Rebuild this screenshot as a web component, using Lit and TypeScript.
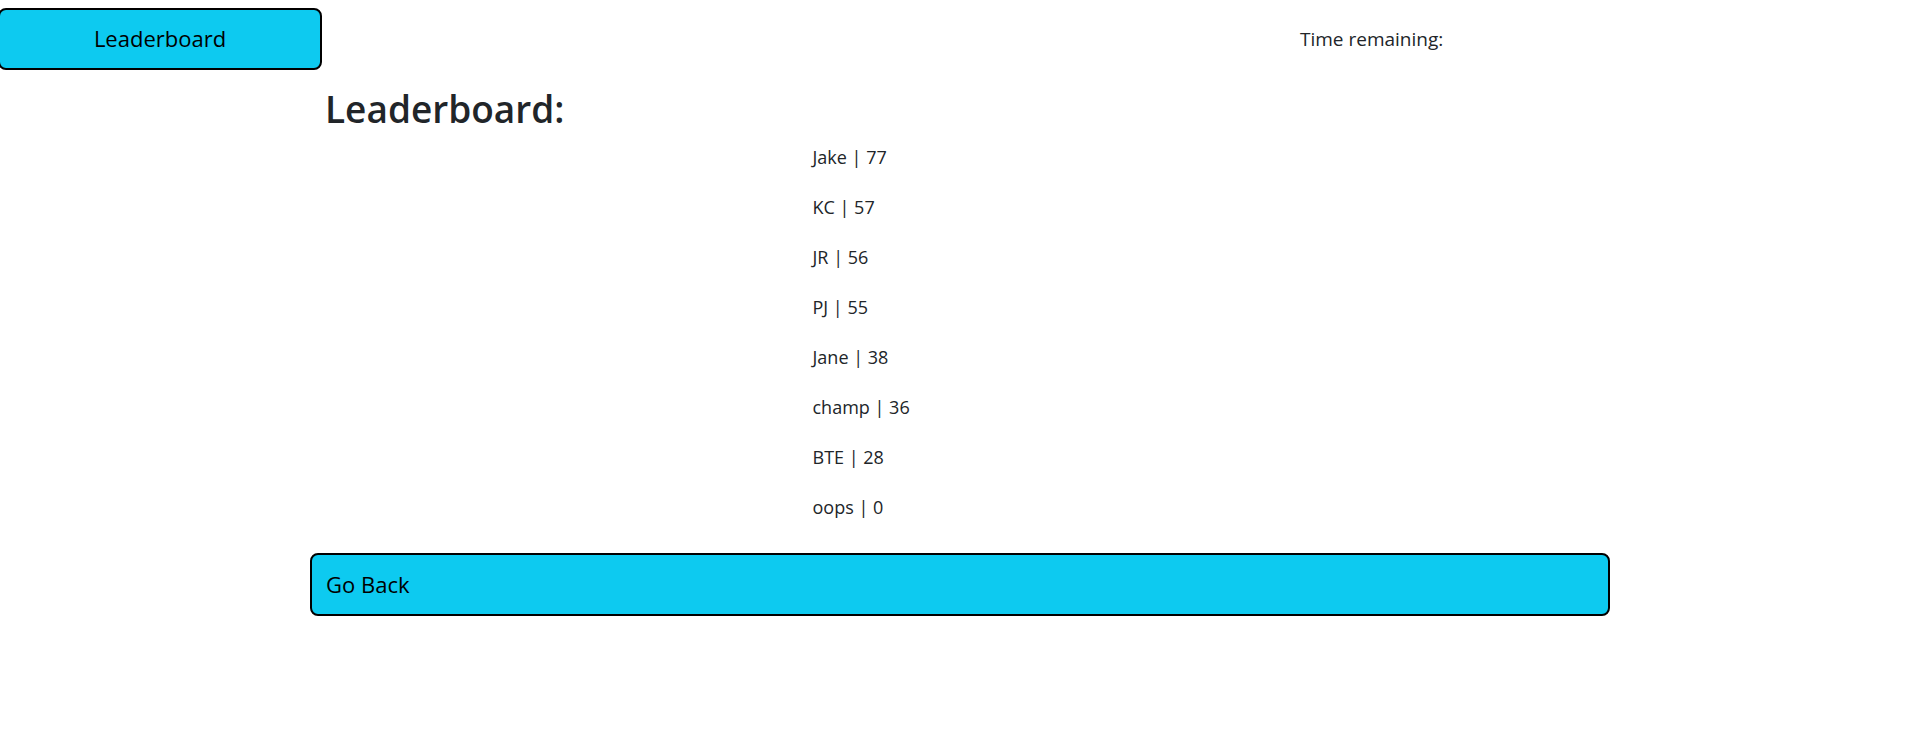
import { LitElement, html, css } from "lit";
import { customElement, state } from "lit/decorators.js";

interface Score {
  name: string;
  points: number;
}

@customElement("app-root")
export class AppRoot extends LitElement {
  static styles = css`
    :host {
      display: block;
      overflow: hidden;
      background: #fff;
      color: #212529;
      font-family: "Segoe UI", "Open Sans", "Noto Sans", sans-serif;
      font-size: 19px;
      line-height: 30px;
    }
    .row {
      display: grid;
      grid-template-columns: repeat(12, minmax(0, 1fr));
      margin: 0 -18px 0 -15px;
    }
    .top {
      padding-top: 8px;
      align-items: center;
    }
    .btn {
      box-sizing: border-box;
      padding: 13px 14px 15px;
      border: 2px solid #000;
      border-radius: 8px;
      background: #0dcaf0;
      color: #000;
      font-family: inherit;
      font-size: 22px;
      font-weight: 400;
      line-height: 30px;
      cursor: pointer;
    }
    .show {
      grid-column: 1 / span 2;
      margin: 0 -12px 0 13px;
    }
    .time {
      grid-column: 9 / span 2;
      padding: 0 15px;
    }
    h1 {
      grid-column: 3 / span 8;
      margin: 15px 0 9px;
      padding: 0 15px;
      font-size: 37px;
      font-weight: 600;
      line-height: 48px;
    }
    .scores {
      grid-column: 6 / span 5;
      margin: 0;
      padding: 0 15px;
      font-size: 18px;
      list-style: none;
    }
    .scores li {
      margin-bottom: 20px;
    }
    .back {
      grid-column: 3 / span 8;
      min-height: 63px;
      margin-top: 11px;
      text-align: left;
    }
  `;

  @state() private scores: Score[] = [
    { name: "Jake", points: 77 },
    { name: "KC", points: 57 },
    { name: "JR", points: 56 },
    { name: "PJ", points: 55 },
    { name: "Jane", points: 38 },
    { name: "champ", points: 36 },
    { name: "BTE", points: 28 },
    { name: "oops", points: 0 },
  ];

  render() {
    return html`
      <header class="row top">
        <button class="btn show" type="button">Leaderboard</button>
        <div class="time">Time remaining:</div>
      </header>
      <main class="row">
        <h1>Leaderboard:</h1>
        <ol class="scores">
          ${this.scores.map((s) => html`<li>${s.name} | ${s.points}</li>`)}
        </ol>
        <button class="btn back" type="button">Go Back</button>
      </main>
    `;
  }
}
